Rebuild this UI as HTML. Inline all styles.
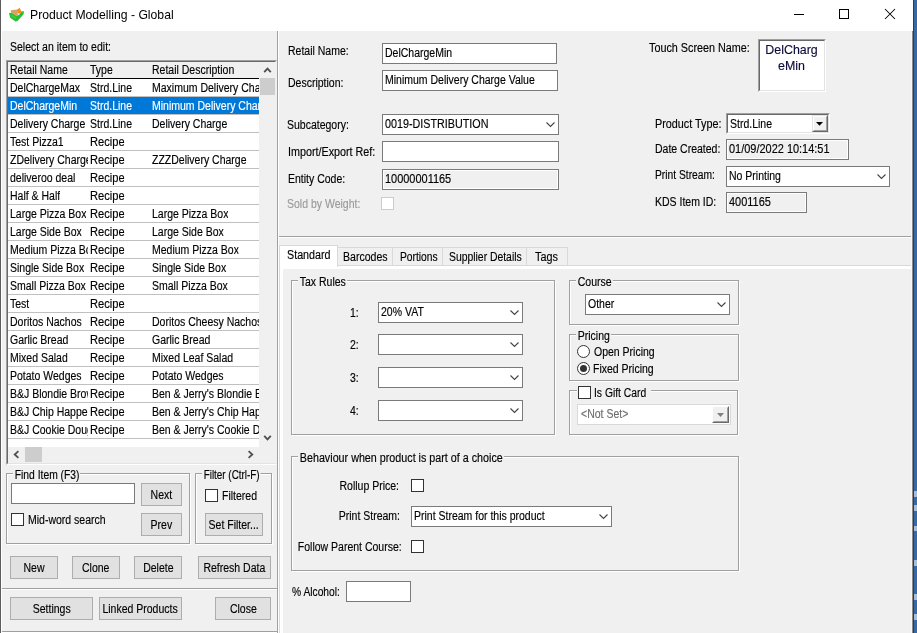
<!DOCTYPE html>
<html><head><meta charset="utf-8"><title>Product Modelling - Global</title>
<style>
*{box-sizing:border-box;margin:0;padding:0}
html,body{width:917px;height:633px;overflow:hidden;background:#f0f0f0}
body{font-family:"Liberation Sans",sans-serif;font-size:12px;color:#000;position:relative}
.s{display:inline-block;-webkit-text-stroke:.15px currentColor;transform:scaleX(.875);transform-origin:0 50%;white-space:nowrap}
.s.rr{transform-origin:100% 50%}
.s.cc{transform-origin:50% 50%}
.s.n{transform:scaleX(.913)}
.a{position:absolute;white-space:nowrap}
.t{position:absolute;white-space:nowrap;line-height:14px;height:14px}
.r{text-align:right}
.inp{position:absolute;background:#fff;border:1px solid #7a7a7a;line-height:14px;padding:2px 0 0 2px;white-space:nowrap;overflow:hidden}
.ro{background:#f0f0f0;box-shadow:inset 0 0 0 1px #fff}
.btn{position:absolute;background:#e1e1e1;border:1px solid #adadad;display:flex;justify-content:center;white-space:nowrap}
.grp{position:absolute;border:1px solid #a0a0a0;box-shadow:inset 1px 1px 0 #fff, 1px 1px 0 #fff}
.gl{position:absolute;background:#f0f0f0;white-space:nowrap;line-height:14px;height:14px;padding:0 1px 0 2px;-webkit-text-stroke:.15px currentColor;transform:scaleX(.875);transform-origin:0 50%}
.cb{position:absolute;width:13px;height:13px;background:#fff;border:1px solid #333}
.rd{position:absolute;width:13px;height:13px;background:#fff;border:1px solid #333;border-radius:50%}
.rd.on:after{content:"";position:absolute;left:2px;top:2px;width:7px;height:7px;border-radius:50%;background:#333}
svg{position:absolute;overflow:visible}
#w{position:absolute;left:0;top:0;width:917px;height:633px;will-change:transform}
#tb{position:absolute;left:0;top:0;width:913px;height:31px;background:#fff}
#lst{position:absolute;left:6px;top:60px;width:271px;height:405px;border:1px solid #a0a0a0;border-right-color:#f0f0f0;border-bottom-color:#fff;background:#f0f0f0}
#lin{position:absolute;left:0;top:0;right:0;bottom:0;border:1px solid #696969;border-right-color:#f0f0f0;border-bottom-color:#e3e3e3;overflow:hidden}
#lbody{position:absolute;left:0;top:0;width:251px;height:385px;background:#fff;overflow:hidden}
.row{position:absolute;left:0;width:251px;height:18px;border-bottom:1px solid #c0c0c0;line-height:18px;overflow:hidden}
.row span{position:absolute;top:0;white-space:nowrap;overflow:hidden;height:18px}
.c1{left:2px;width:78px}.c2{left:82px;width:60px}.c3{left:144px;width:107px}
.hdr{background:#f0f0f0;border-bottom:1px solid #000}
.sel{background:#0078d7;color:#fff}
.tab{position:absolute;top:247px;height:18px;border:1px solid #d9d9d9;border-bottom:none;background:#f0f0f0}
</style></head><body>
<div id="w">
<div id="tb"></div>
<div class="a" style="left:0;top:0;width:1px;height:633px;background:#5c5c5c"></div>
<div class="a" style="left:1px;top:31px;width:1px;height:602px;background:#fff"></div>
<svg style="left:0;top:0" width="30" height="30" viewBox="0 0 30 30">
<path d="M9 13.2 L11.5 12.6 L17 15.8 L20.5 11.6 L24 11.2 L23.6 14.2 L17.5 21 L15.5 21.4 L10.2 17.8 Z" fill="#25c030"/>
<path d="M10.6 10.2 L17.2 9.4 L18.2 15.6 L16.8 16.2 L11.2 13 Z" fill="#d2a566"/>
<path d="M16.8 10 L19.6 7.8 L21.8 12.2 L20 14 L17.6 13.2 Z" fill="#ff8a18"/>
<path d="M17.8 13 L19.6 13 L19.4 15 L17.8 15.2 Z" fill="#cfe4f5"/>
<path d="M11 14 L16.5 17.2 L16 19.5 L11.5 16.8 Z" fill="#4fc848" opacity=".8"/>
</svg>
<div class="a" style="left:30px;top:7px;font-size:12.2px;line-height:16px;height:16px">Product Modelling - Global</div>
<div class="a" style="left:794px;top:14px;width:10px;height:1px;background:#000"></div>
<div class="a" style="left:839px;top:9px;width:10px;height:10px;border:1px solid #000"></div>
<svg style="left:885px;top:9px" width="10" height="10" viewBox="0 0 10 10"><path d="M0 0 L10 10 M10 0 L0 10" stroke="#000" stroke-width="1.05" fill="none"/></svg>
<div class="t" style="left:10px;top:40px;"><span class="s ">Select an item to edit:</span></div>
<div id="lst"><div id="lin"><div id="lbody">
<div class="row hdr" style="top:0;height:17px;line-height:16px;border-bottom:1px solid #000"><span class="c1"><span class="s ">Retail Name</span></span><span class="c2"><span class="s ">Type</span></span><span class="c3"><span class="s ">Retail Description</span></span></div>
<div class="row" style="top:17px"><span class="c1"><span class="s ">DelChargeMax</span></span><span class="c2"><span class="s ">Strd.Line</span></span><span class="c3"><span class="s ">Maximum Delivery Charge</span></span></div>
<div class="row sel" style="top:35px"><span class="c1"><span class="s ">DelChargeMin</span></span><span class="c2"><span class="s ">Strd.Line</span></span><span class="c3"><span class="s ">Minimum Delivery Charge</span></span></div>
<div class="row" style="top:53px"><span class="c1"><span class="s ">Delivery Charge</span></span><span class="c2"><span class="s ">Strd.Line</span></span><span class="c3"><span class="s ">Delivery Charge</span></span></div>
<div class="row" style="top:71px"><span class="c1"><span class="s ">Test Pizza1</span></span><span class="c2"><span class="s " style="transform:scaleX(0.928)">Recipe</span></span><span class="c3"></span></div>
<div class="row" style="top:89px"><span class="c1"><span class="s ">ZDelivery Charge</span></span><span class="c2"><span class="s " style="transform:scaleX(0.928)">Recipe</span></span><span class="c3"><span class="s ">ZZZDelivery Charge</span></span></div>
<div class="row" style="top:107px"><span class="c1"><span class="s ">deliveroo deal</span></span><span class="c2"><span class="s " style="transform:scaleX(0.928)">Recipe</span></span><span class="c3"></span></div>
<div class="row" style="top:125px"><span class="c1"><span class="s ">Half &amp; Half</span></span><span class="c2"><span class="s " style="transform:scaleX(0.928)">Recipe</span></span><span class="c3"></span></div>
<div class="row" style="top:143px"><span class="c1"><span class="s ">Large Pizza Box</span></span><span class="c2"><span class="s " style="transform:scaleX(0.928)">Recipe</span></span><span class="c3"><span class="s ">Large Pizza Box</span></span></div>
<div class="row" style="top:161px"><span class="c1"><span class="s ">Large Side Box</span></span><span class="c2"><span class="s " style="transform:scaleX(0.928)">Recipe</span></span><span class="c3"><span class="s ">Large Side Box</span></span></div>
<div class="row" style="top:179px"><span class="c1"><span class="s ">Medium Pizza Box</span></span><span class="c2"><span class="s " style="transform:scaleX(0.928)">Recipe</span></span><span class="c3"><span class="s ">Medium Pizza Box</span></span></div>
<div class="row" style="top:197px"><span class="c1"><span class="s ">Single Side Box</span></span><span class="c2"><span class="s " style="transform:scaleX(0.928)">Recipe</span></span><span class="c3"><span class="s ">Single Side Box</span></span></div>
<div class="row" style="top:215px"><span class="c1"><span class="s ">Small Pizza Box</span></span><span class="c2"><span class="s " style="transform:scaleX(0.928)">Recipe</span></span><span class="c3"><span class="s ">Small Pizza Box</span></span></div>
<div class="row" style="top:233px"><span class="c1"><span class="s ">Test</span></span><span class="c2"><span class="s " style="transform:scaleX(0.928)">Recipe</span></span><span class="c3"></span></div>
<div class="row" style="top:251px"><span class="c1"><span class="s ">Doritos Nachos</span></span><span class="c2"><span class="s " style="transform:scaleX(0.928)">Recipe</span></span><span class="c3"><span class="s ">Doritos Cheesy Nachos</span></span></div>
<div class="row" style="top:269px"><span class="c1"><span class="s ">Garlic Bread</span></span><span class="c2"><span class="s " style="transform:scaleX(0.928)">Recipe</span></span><span class="c3"><span class="s ">Garlic Bread</span></span></div>
<div class="row" style="top:287px"><span class="c1"><span class="s ">Mixed Salad</span></span><span class="c2"><span class="s " style="transform:scaleX(0.928)">Recipe</span></span><span class="c3"><span class="s ">Mixed Leaf Salad</span></span></div>
<div class="row" style="top:305px"><span class="c1"><span class="s ">Potato Wedges</span></span><span class="c2"><span class="s " style="transform:scaleX(0.928)">Recipe</span></span><span class="c3"><span class="s ">Potato Wedges</span></span></div>
<div class="row" style="top:323px"><span class="c1"><span class="s ">B&amp;J Blondie Brownie</span></span><span class="c2"><span class="s " style="transform:scaleX(0.928)">Recipe</span></span><span class="c3"><span class="s ">Ben &amp; Jerry's Blondie Brownie</span></span></div>
<div class="row" style="top:341px"><span class="c1"><span class="s ">B&amp;J Chip Happens</span></span><span class="c2"><span class="s " style="transform:scaleX(0.928)">Recipe</span></span><span class="c3"><span class="s ">Ben &amp; Jerry's Chip Happens</span></span></div>
<div class="row" style="top:359px"><span class="c1"><span class="s ">B&amp;J Cookie Dough</span></span><span class="c2"><span class="s " style="transform:scaleX(0.928)">Recipe</span></span><span class="c3"><span class="s ">Ben &amp; Jerry's Cookie Dough</span></span></div>
</div>
<div class="a" style="left:251px;top:0;width:17px;height:385px;background:#f0f0f0"></div>
<div class="a" style="left:252px;top:16px;width:15px;height:17px;background:#cdcdcd"></div>
<svg style="left:256px;top:5px" width="7" height="6" viewBox="0 0 7 6"><path d="M0.2 5.2 L3.5 1.6 L6.8 5.2" fill="none" stroke="#505050" stroke-width="1.8"/></svg>
<svg style="left:256px;top:373px" width="7" height="6" viewBox="0 0 7 6"><path d="M0.2 0.8 L3.5 4.4 L6.8 0.8" fill="none" stroke="#505050" stroke-width="1.8"/></svg>
<div class="a" style="left:0;top:385px;width:268px;height:17px;background:#f0f0f0"></div>
<div class="a" style="left:17px;top:385px;width:17px;height:15px;background:#cdcdcd"></div>
<svg style="left:5px;top:389px" width="6" height="7" viewBox="0 0 6 7"><path d="M5.4 0.2 L1.7 3.5 L5.4 6.8" fill="none" stroke="#505050" stroke-width="1.8"/></svg>
<svg style="left:240px;top:389px" width="6" height="7" viewBox="0 0 6 7"><path d="M0.6 0.2 L4.3 3.5 L0.6 6.8" fill="none" stroke="#505050" stroke-width="1.8"/></svg>
</div></div>
<div class="grp" style="left:6px;top:473px;width:184px;height:71px"></div>
<div class="gl" style="left:12.8px;top:468px;transform:scaleX(0.86)">Find Item (F3)</div>
<div class="inp" style="left:11px;top:483px;width:124px;height:21px;"></div>
<div class="btn" style="left:141px;top:483px;width:41px;height:23px;line-height:23px;overflow:hidden"><span class="s cc">Next</span></div>
<div class="btn" style="left:141px;top:513px;width:41px;height:23px;line-height:23px;overflow:hidden"><span class="s cc">Prev</span></div>
<div class="cb" style="left:11px;top:513px;"></div>
<div class="t" style="left:28px;top:513px;"><span class="s ">Mid-word search</span></div>
<div class="grp" style="left:195px;top:473px;width:77px;height:71px"></div>
<div class="gl" style="left:201.5px;top:468px;transform:scaleX(0.824)">Filter (Ctrl-F)</div>
<div class="cb" style="left:205px;top:489px;"></div>
<div class="t" style="left:222px;top:489px;"><span class="s ">Filtered</span></div>
<div class="btn" style="left:205px;top:513px;width:58px;height:23px;line-height:23px;overflow:hidden"><span class="s cc">Set Filter...</span></div>
<div class="btn" style="left:10px;top:556px;width:48px;height:23px;line-height:23px;overflow:hidden"><span class="s cc">New</span></div>
<div class="btn" style="left:72px;top:556px;width:48px;height:23px;line-height:23px;overflow:hidden"><span class="s cc">Clone</span></div>
<div class="btn" style="left:134px;top:556px;width:48px;height:23px;line-height:23px;overflow:hidden"><span class="s cc">Delete</span></div>
<div class="btn" style="left:198px;top:556px;width:73px;height:23px;line-height:23px;overflow:hidden"><span class="s cc">Refresh Data</span></div>
<div class="a" style="left:2px;top:588px;width:275px;height:1px;background:#a0a0a0"></div>
<div class="a" style="left:2px;top:589px;width:275px;height:1px;background:#fff"></div>
<div class="btn" style="left:10px;top:597px;width:83px;height:23px;line-height:23px;overflow:hidden"><span class="s cc">Settings</span></div>
<div class="btn" style="left:99px;top:597px;width:83px;height:23px;line-height:23px;overflow:hidden"><span class="s cc">Linked Products</span></div>
<div class="btn" style="left:215px;top:597px;width:56px;height:23px;line-height:23px;overflow:hidden"><span class="s cc">Close</span></div>
<div class="a" style="left:2px;top:631px;width:275px;height:1px;background:#a0a0a0"></div>
<div class="a" style="left:2px;top:632px;width:275px;height:1px;background:#fff"></div>
<div class="a" style="left:277px;top:31px;width:1px;height:602px;background:#a0a0a0"></div>
<div class="a" style="left:278px;top:31px;width:1px;height:602px;background:#fff"></div>
<div class="t" style="left:288px;top:44px;"><span class="s ">Retail Name:</span></div>
<div class="inp" style="left:382px;top:43px;width:175px;height:21px;"><span class="s ">DelChargeMin</span></div>
<div class="t" style="left:288px;top:76px;"><span class="s ">Description:</span></div>
<div class="inp" style="left:382px;top:70px;width:176px;height:21px;"><span class="s ">Minimum Delivery Charge Value</span></div>
<div class="t" style="left:287px;top:118px;"><span class="s ">Subcategory:</span></div>
<div class="inp" style="left:382px;top:114px;width:177px;height:21px;"><span class="s " style="transform:scaleX(0.897)">0019-DISTRIBUTION</span></div>
<svg style="left:546px;top:122px" width="9" height="5" viewBox="0 0 9 5"><path d="M0.5 0.5 L4.5 4.5 L8.5 0.5" fill="none" stroke="#444" stroke-width="1.1"/></svg>
<div class="t" style="left:288px;top:145px;"><span class="s " style="transform:scaleX(0.897)">Import/Export Ref:</span></div>
<div class="inp" style="left:382px;top:141px;width:177px;height:21px;"></div>
<div class="t" style="left:288px;top:172px;"><span class="s ">Entity Code:</span></div>
<div class="inp ro" style="left:382px;top:169px;width:177px;height:21px;"><span class="s n">10000001165</span></div>
<div class="t" style="left:287px;top:197px;color:#9a9a9a"><span class="s ">Sold by Weight:</span></div>
<div class="cb" style="left:381px;top:197px;border-color:#cccccc"></div>
<div class="t" style="left:648.6px;top:41px;"><span class="s " style="transform:scaleX(0.9)">Touch Screen Name:</span></div>
<div class="a" style="left:758px;top:39px;width:68px;height:53px;background:#fff;border:1px solid #a0a0a0;border-right-color:#fff;border-bottom-color:#fff"></div>
<div class="a" style="left:759px;top:40px;width:66px;height:51px;background:#fff;border:1px solid #696969;border-right-color:#e3e3e3;border-bottom-color:#e3e3e3;text-align:center;line-height:16px;color:#0c0c3a;padding-top:1px;white-space:normal"><span class="s cc" style="font-size:13.5px;transform:scaleX(.92)">DelCharg<br>eMin</span></div>
<div class="t" style="left:655px;top:117px;"><span class="s " style="transform:scaleX(0.9)">Product Type:</span></div>
<div class="a" style="left:726px;top:113px;width:104px;height:21px;background:#fff;border:1px solid #a0a0a0;border-right-color:#fff;border-bottom-color:#fff"></div>
<div class="a" style="left:727px;top:114px;width:102px;height:19px;background:#fff;border:1px solid #696969;border-right-color:#e3e3e3;border-bottom-color:#e3e3e3;line-height:14px;padding:2px 0 0 2px"><span class="s">Strd.Line</span></div>
<div class="a" style="left:812px;top:115px;width:16px;height:17px;background:#f0f0f0;border:1px solid #e3e3e3;border-right-color:#696969;border-bottom-color:#696969"></div>
<div class="a" style="left:813px;top:116px;width:14px;height:15px;border:1px solid #fff;border-right-color:#a0a0a0;border-bottom-color:#a0a0a0"></div>
<svg style="left:816px;top:122px" width="7" height="4" viewBox="0 0 7 4"><path d="M0 0 L7 0 L3.5 3.8 Z" fill="#000"/></svg>
<div class="t" style="left:655px;top:142px;"><span class="s ">Date Created:</span></div>
<div class="inp ro" style="left:726px;top:139px;width:123px;height:21px;"><span class="s n">01/09/2022 10:14:51</span></div>
<div class="t" style="left:655px;top:168px;"><span class="s " style="transform:scaleX(0.856)">Print Stream:</span></div>
<div class="inp" style="left:726px;top:166px;width:164px;height:21px;"><span class="s ">No Printing</span></div>
<svg style="left:877px;top:174px" width="9" height="5" viewBox="0 0 9 5"><path d="M0.5 0.5 L4.5 4.5 L8.5 0.5" fill="none" stroke="#444" stroke-width="1.1"/></svg>
<div class="t" style="left:655px;top:195px;"><span class="s ">KDS Item ID:</span></div>
<div class="inp ro" style="left:726px;top:192px;width:81px;height:21px;"><span class="s n">4001165</span></div>
<div class="a" style="left:279px;top:236px;width:633px;height:1px;background:#a0a0a0"></div>
<div class="a" style="left:279px;top:237px;width:633px;height:1px;background:#fff"></div>
<div class="a" style="left:279px;top:265px;width:634px;height:370px;background:#fff;border:1px solid #d9d9d9"></div>
<div class="a" style="left:283px;top:269px;width:630px;height:366px;background:#f0f0f0"></div>
<div class="tab" style="left:337px;width:56px"></div>
<div class="t" style="left:342.5px;top:250px"><span class="s" style="transform:scaleX(0.88)">Barcodes</span></div>
<div class="tab" style="left:392px;width:51px"></div>
<div class="t" style="left:399.8px;top:250px"><span class="s" style="transform:scaleX(0.855)">Portions</span></div>
<div class="tab" style="left:442px;width:85px"></div>
<div class="t" style="left:449.3px;top:250px"><span class="s" style="transform:scaleX(0.865)">Supplier Details</span></div>
<div class="tab" style="left:526px;width:42px"></div>
<div class="t" style="left:535.2px;top:250px"><span class="s" style="transform:scaleX(0.9)">Tags</span></div>
<div class="a" style="left:279px;top:245px;width:59px;height:22px;border:1px solid #d9d9d9;border-bottom:none;background:#fff"></div>
<div class="t" style="left:287px;top:248px"><span class="s" style="transform:scaleX(.895)">Standard</span></div>
<div class="grp" style="left:291px;top:280px;width:264px;height:155px"></div>
<div class="gl" style="left:298px;top:275px">Tax Rules</div>
<div class="t" style="left:349.5px;top:306px;"><span class="s ">1:</span></div>
<div class="inp" style="left:378px;top:302px;width:145px;height:21px;"><span class="s ">20% VAT</span></div>
<svg style="left:510px;top:310px" width="9" height="5" viewBox="0 0 9 5"><path d="M0.5 0.5 L4.5 4.5 L8.5 0.5" fill="none" stroke="#444" stroke-width="1.1"/></svg>
<div class="t" style="left:349.5px;top:338px;"><span class="s ">2:</span></div>
<div class="inp" style="left:378px;top:334px;width:145px;height:21px;"></div>
<svg style="left:510px;top:342px" width="9" height="5" viewBox="0 0 9 5"><path d="M0.5 0.5 L4.5 4.5 L8.5 0.5" fill="none" stroke="#444" stroke-width="1.1"/></svg>
<div class="t" style="left:349.5px;top:371px;"><span class="s ">3:</span></div>
<div class="inp" style="left:378px;top:367px;width:145px;height:21px;"></div>
<svg style="left:510px;top:375px" width="9" height="5" viewBox="0 0 9 5"><path d="M0.5 0.5 L4.5 4.5 L8.5 0.5" fill="none" stroke="#444" stroke-width="1.1"/></svg>
<div class="t" style="left:349.5px;top:404px;"><span class="s ">4:</span></div>
<div class="inp" style="left:378px;top:400px;width:145px;height:21px;"></div>
<svg style="left:510px;top:408px" width="9" height="5" viewBox="0 0 9 5"><path d="M0.5 0.5 L4.5 4.5 L8.5 0.5" fill="none" stroke="#444" stroke-width="1.1"/></svg>
<div class="grp" style="left:569px;top:280px;width:170px;height:45px"></div>
<div class="gl" style="left:576px;top:275px">Course</div>
<div class="inp" style="left:585px;top:294px;width:145px;height:21px;"><span class="s ">Other</span></div>
<svg style="left:717px;top:302px" width="9" height="5" viewBox="0 0 9 5"><path d="M0.5 0.5 L4.5 4.5 L8.5 0.5" fill="none" stroke="#444" stroke-width="1.1"/></svg>
<div class="grp" style="left:569px;top:334px;width:170px;height:47px"></div>
<div class="gl" style="left:576px;top:329px">Pricing</div>
<div class="rd" style="left:577px;top:345px"></div>
<div class="t" style="left:593.5px;top:344.5px;"><span class="s ">Open Pricing</span></div>
<div class="rd on" style="left:577px;top:362px"></div>
<div class="t" style="left:592.8px;top:362px;"><span class="s ">Fixed Pricing</span></div>
<div class="grp" style="left:569px;top:390px;width:169px;height:45px"></div>
<div class="a" style="left:577px;top:386px;width:74px;height:12px;background:#f0f0f0"></div>
<div class="cb" style="left:578px;top:386px;"></div>
<div class="t" style="left:593.8px;top:385.5px;"><span class="s " style="transform:scaleX(0.86)">Is Gift Card</span></div>
<div class="a" style="left:577px;top:404px;width:154px;height:21px;background:#fff;border:1px solid #d9d9d9;line-height:14px;padding:2px 0 0 3px;color:#6d6d6d"><span class="s">&lt;Not Set&gt;</span></div>
<div class="a" style="left:712px;top:406px;width:17px;height:17px;background:#f0f0f0;border:1px solid #fff;border-right-color:#696969;border-bottom-color:#696969"></div>
<div class="a" style="left:713px;top:407px;width:15px;height:15px;border:1px solid #f0f0f0;border-right-color:#a0a0a0;border-bottom-color:#a0a0a0"></div>
<svg style="left:717px;top:413px" width="7" height="4" viewBox="0 0 7 4"><path d="M0 0 L7 0 L3.5 4 Z" fill="#808080"/></svg>
<div class="grp" style="left:291px;top:456px;width:448px;height:115px"></div>
<div class="gl" style="left:297.5px;top:451px;transform:scaleX(0.895)">Behaviour when product is part of a choice</div>
<div class="t r" style="left:198.60000000000002px;width:200px;top:479px;"><span class="s rr">Rollup Price:</span></div>
<div class="cb" style="left:411px;top:479px;"></div>
<div class="t r" style="left:199.60000000000002px;width:200px;top:509px;"><span class="s rr">Print Stream:</span></div>
<div class="inp" style="left:411px;top:506px;width:201px;height:21px;"><span class="s ">Print Stream for this product</span></div>
<svg style="left:599px;top:514px" width="9" height="5" viewBox="0 0 9 5"><path d="M0.5 0.5 L4.5 4.5 L8.5 0.5" fill="none" stroke="#444" stroke-width="1.1"/></svg>
<div class="t r" style="left:201.60000000000002px;width:200px;top:539.5px;"><span class="s rr">Follow Parent Course:</span></div>
<div class="cb" style="left:411px;top:540px;"></div>
<div class="t" style="left:292px;top:585px;"><span class="s " style="transform:scaleX(0.855)">% Alcohol:</span></div>
<div class="inp" style="left:346px;top:581px;width:65px;height:21px;"></div>
<div class="a" style="left:911px;top:31px;width:1px;height:602px;background:#f7f7f7"></div>
<div class="a" style="left:912px;top:31px;width:1px;height:602px;background:#8c8c8c"></div>
<div class="a" style="left:913px;top:0;width:1px;height:633px;background:#2a3b5a"></div>
<div class="a" style="left:914px;top:0;width:3px;height:633px;background:#3868a6"></div>
<div class="a" style="left:914px;top:491px;width:3px;height:6px;background:#a9bcd8"></div>
<div class="a" style="left:914px;top:505px;width:3px;height:6px;background:#a9bcd8"></div>
<div class="a" style="left:914px;top:526px;width:3px;height:5px;background:#a9bcd8"></div>
<div class="a" style="left:914px;top:560px;width:3px;height:6px;background:#a9bcd8"></div>
<div class="a" style="left:914px;top:594px;width:3px;height:6px;background:#a9bcd8"></div>
<div class="a" style="left:914px;top:614px;width:3px;height:6px;background:#a9bcd8"></div>
</div>
</body></html>
